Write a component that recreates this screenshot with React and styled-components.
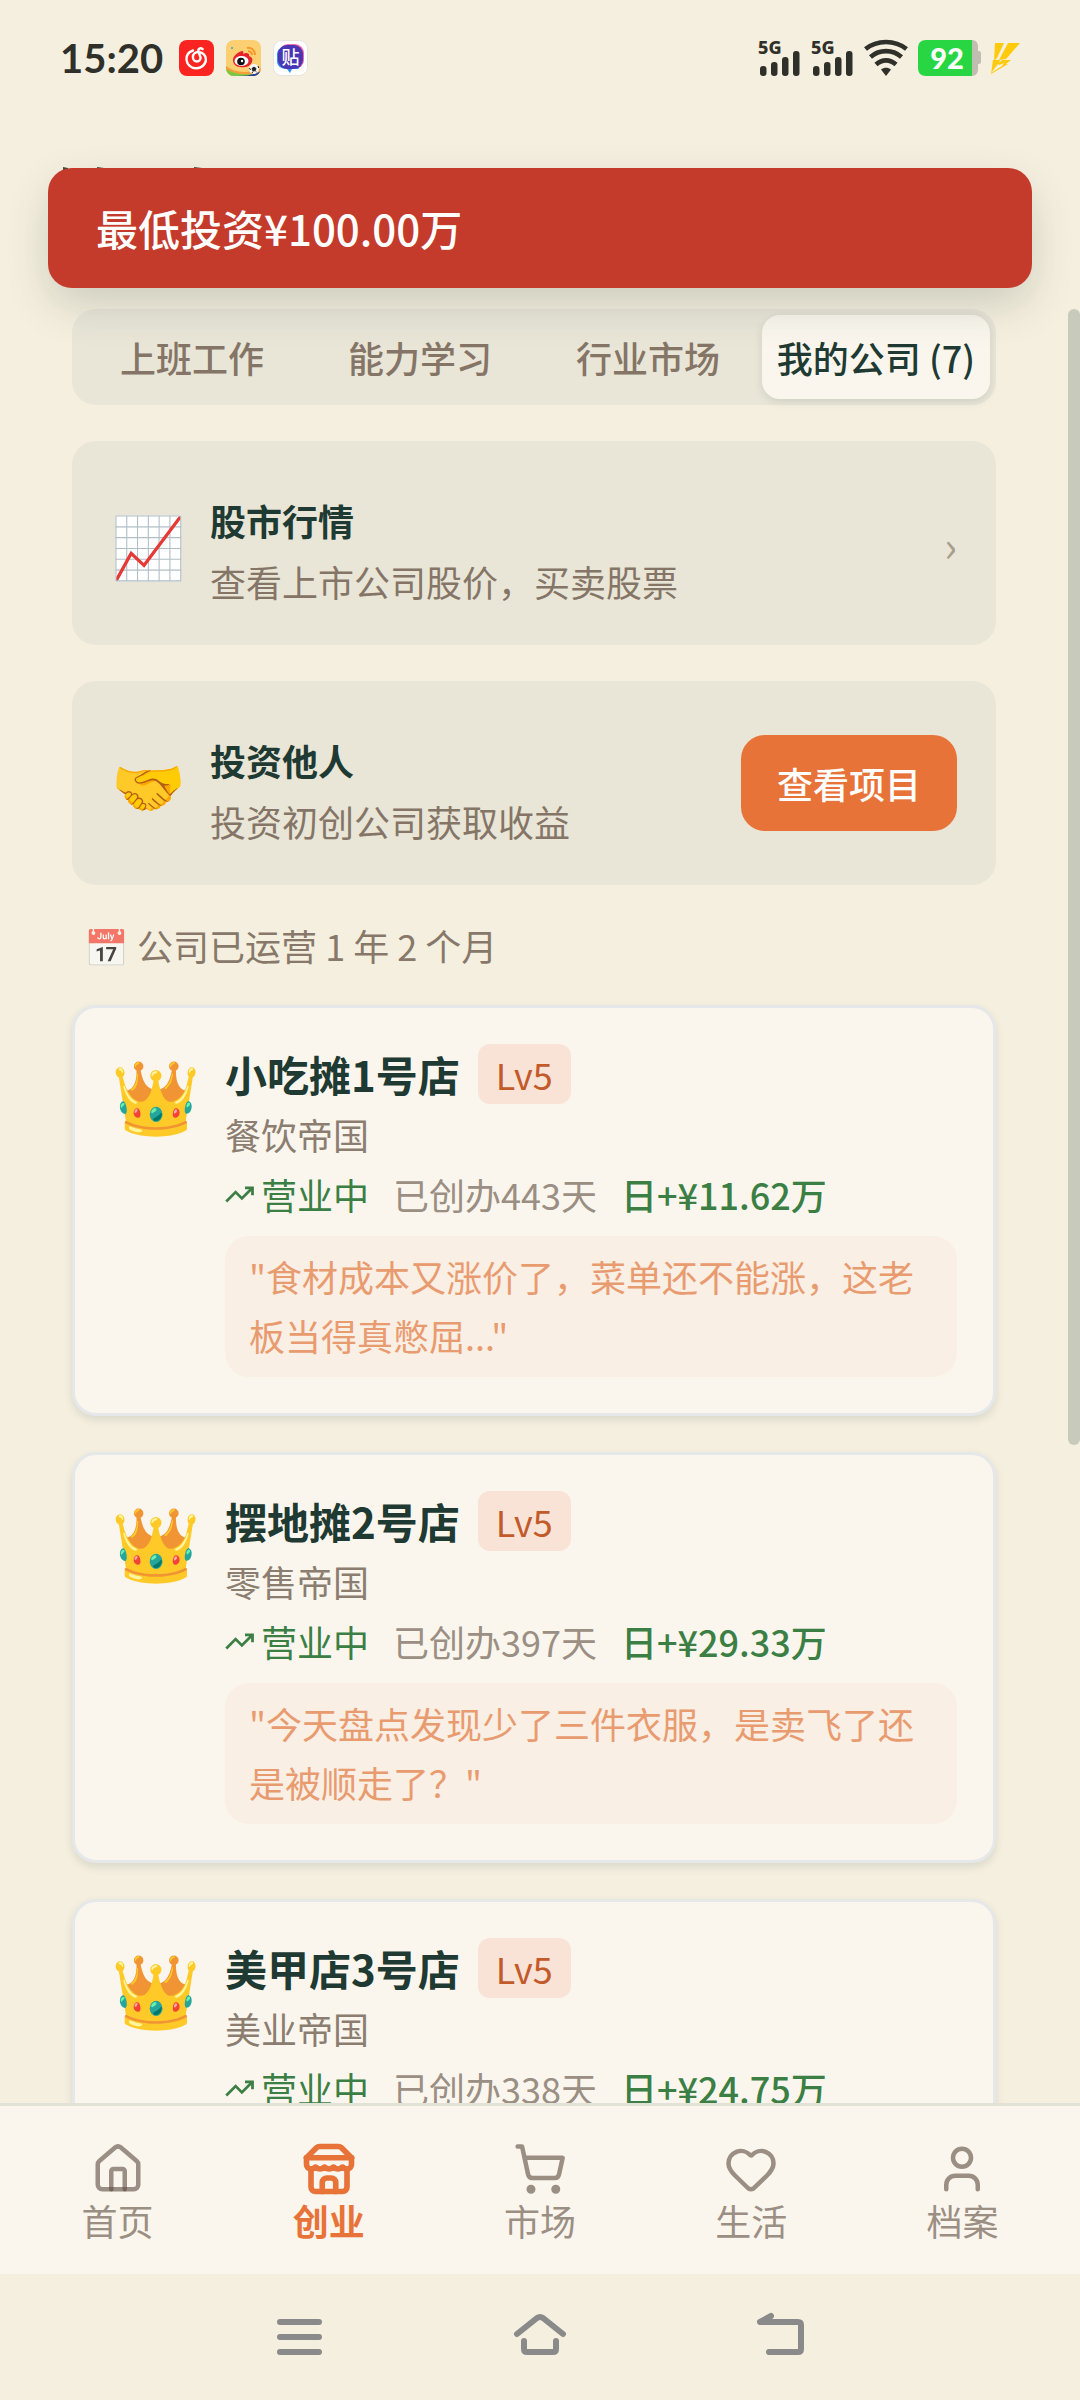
import React from "react";
import styled, { createGlobalStyle } from "styled-components";
import { Heart, ShoppingCart, User } from "lucide-react";

const GlobalStyle = createGlobalStyle`
  * {
    box-sizing: border-box;
  }

  body {
    margin: 0;
    background: #f5efdf;
    color: #1e3a32;
    font-family: "Noto Sans CJK SC", "Noto Sans", sans-serif;
    font-size: 36px;
  }

  button {
    border: 0;
    padding: 0;
    background: none;
    color: inherit;
    font: inherit;
    cursor: pointer;
  }

  h1, h2, h3, p {
    margin: 0;
  }
`;

const Page = styled.div`
  position: relative;
  display: flex;
  flex-direction: column;
  height: 100vh;
  overflow: hidden;
`;

const StatusBar = styled.div`
  display: flex;
  align-items: center;
  justify-content: space-between;
  padding: 30px 60px 0;
`;

const StatusGroup = styled.div`
  display: flex;
  align-items: center;
  gap: ${({ $gap }) => $gap}px;
`;

const Clock = styled.span`
  margin-right: 4px;
  color: #30302a;
  font-family: Lato, sans-serif;
  font-size: 40px;
  font-weight: 700;
  line-height: 56px;
`;

const Header = styled.header`
  display: flex;
  flex: none;
  height: 223px;
  padding: 81px 63px 0;
`;

const Toast = styled.div`
  position: absolute;
  top: 168px;
  left: 48px;
  right: 48px;
  z-index: 10;
  padding: 30px 48px;
  border-radius: 24px;
  background: #c43a2b;
  box-shadow: 0 18px 45px -3px rgba(28, 58, 48, 0.2);
  color: #ffffff;
  font-size: 42px;
  font-weight: 500;
  line-height: 60px;
`;

const Content = styled.main`
  position: relative;
  display: flex;
  flex: 1;
  flex-direction: column;
  min-height: 0;
  overflow: hidden;
  padding: 0 84px 0 72px;
`;

const Scrollbar = styled.div`
  position: absolute;
  top: 0;
  right: 0;
  width: 12px;
  height: 1136px;
  border-radius: 6px;
  background: #c8cabb;
`;

const Tabs = styled.div`
  display: grid;
  flex: none;
  grid-template-columns: repeat(4, 1fr);
  padding: 6px;
  border-radius: 24px;
  background: #e9e6d8;
`;

const Tab = styled.button`
  height: 84px;
  border-radius: 18px;
  background: ${({ $active }) => ($active ? "#faf6ed" : "transparent")};
  box-shadow: ${({ $active }) => ($active ? "0 3px 9px rgba(28, 58, 48, 0.12)" : "none")};
  color: ${({ $active }) => ($active ? "#1e3a32" : "#857566")};
  font-weight: 500;
  line-height: 52px;
  white-space: nowrap;
`;

const EntryCard = styled.section`
  display: flex;
  flex: none;
  align-items: center;
  gap: 24px;
  margin-top: 36px;
  padding: 39px;
  border-radius: 24px;
  background: #e9e6d8;
`;

const EntryEmoji = styled.span`
  font-size: 60px;
  line-height: 90px;
`;

const EntryText = styled.div`
  flex: 1;
  padding: 13px 0 1px;
`;

const EntryTitle = styled.h2`
  font-size: 36px;
  font-weight: 700;
  line-height: 54px;
`;

const EntryHint = styled.p`
  padding-top: 10px;
  color: #857566;
  line-height: 48px;
`;

const Chevron = styled.span`
  color: #a79e8c;
  font-size: 42px;
`;

const PrimaryButton = styled.button`
  padding: 20px 36px;
  border-radius: 24px;
  background: #e87339;
  color: #ffffff;
  font-weight: 500;
  line-height: 56px;
`;

const RunningTime = styled.p`
  flex: none;
  padding: 33px 12px 33px;
  color: #87786a;
  line-height: 54px;
`;

const Calendar = styled.span`
  opacity: 0.7;
`;

const CompanyList = styled.div`
  display: flex;
  flex: none;
  flex-direction: column;
  gap: 36px;
`;

const CompanyCard = styled.article`
  display: flex;
  align-items: flex-start;
  gap: 24px;
  padding: 36px;
  border: 3px solid #e5e7e9;
  border-radius: 24px;
  background: #faf6ed;
  box-shadow: 0 4px 9px rgba(28, 58, 48, 0.12);
`;

const CompanyEmoji = styled.span`
  font-size: 72px;
  line-height: 96px;
`;

const CompanyInfo = styled.div`
  flex: 1;
  min-width: 0;
  line-height: 60px;
`;

const CompanyHead = styled.div`
  display: flex;
  align-items: center;
  gap: 18px;
`;

const CompanyName = styled.h3`
  font-size: 42px;
  font-weight: 700;
`;

const Level = styled.span`
  padding: 0 18px;
  border-radius: 12px;
  background: #f8e3d6;
  color: #c25a2a;
`;

const Industry = styled.p`
  color: #8b7d70;
`;

const Stats = styled.div`
  display: flex;
  gap: 24px;
`;

const Status = styled.span`
  display: flex;
  align-items: center;
  gap: 6px;
  color: #3b7f45;
`;

const Age = styled.span`
  color: #9b8e83;
`;

const Income = styled.span`
  color: #3b7f45;
  font-weight: 500;
`;

const Quote = styled.p`
  margin-top: 12px;
  padding: 11px 24px 12px;
  border-radius: 24px;
  background: #f9efe4;
  color: #e99b70;
  line-height: 59px;
`;

const TabBar = styled.nav`
  display: grid;
  flex: none;
  grid-template-columns: repeat(5, 1fr);
  padding: 36px 12px 30px;
  border-top: 3px solid #e3e2d6;
  background: #faf5ed;
`;

const TabBarItem = styled.button`
  display: flex;
  flex-direction: column;
  align-items: center;
  color: ${({ $active }) => ($active ? "#e87339" : "#9b8e83")};
  font-weight: ${({ $active }) => ($active ? 700 : 400)};
  line-height: 48px;
`;

const SystemBar = styled.div`
  display: flex;
  flex: none;
  align-items: center;
  justify-content: center;
  gap: 180px;
  height: 126px;
`;

const SystemButton = styled.button`
  display: flex;
  width: 60px;
  height: 60px;
`;

function MusicIcon() {
  return (
    <svg width="35" height="36" viewBox="0 0 35 36">
      <rect width="35" height="36" rx="8" fill="#fb2420" />
      <path
        d="M14 10.500c-4.500 1.600-7 5-6.500 9.300.6 4.700 4.500 8.500 9.700 8.500s9.700-3.900 9.700-8.800c0-4.200-3.400-7.500-7.500-7.500-3.200 0-5.500 2.200-5.500 5 0 2.600 1.700 4.500 4 4.500s4-1.900 3.600-4.200l-2.200-6.300c-.4-2.200 2-3.500 4.300-2"
        fill="none"
        stroke="#fff"
        strokeWidth="2.400"
        strokeLinecap="round"
      />
    </svg>
  );
}

function WeiboIcon() {
  return (
    <svg width="35" height="36" viewBox="0 0 35 36">
      <defs>
        <clipPath id="weibo-tile">
          <rect width="35" height="36" rx="8" />
        </clipPath>
      </defs>
      <g clipPath="url(#weibo-tile)">
        <rect width="35" height="36" fill="#fbcf72" />
        <path d="M0 26c9 7 22 8 35 2v8H0z" fill="#f4a03a" />
        <path d="M0 29c9 6 22 7 35 3v4H0z" fill="#7ac943" />
        <path d="M12 36c8 0 16-1 23-5v5z" fill="#2b3f9f" />
        <path d="M21 8c4-1 8 2 8 7M22 11c2 0 4 2 4 4" fill="none" stroke="#f39a2a" strokeWidth="2" />
        <path d="M7 20c0-4 5-8 9-9 1 0 2 1 1 3 3-2 7-1 6 2 3 1 4 3 3 6-2 5-8 6-12 5-4 0-7-3-7-7z" fill="#e6222a" />
        <ellipse cx="15.500" cy="21" rx="7" ry="5" fill="#fff" />
        <circle cx="15" cy="21.500" r="3.800" fill="#111" />
        <circle cx="16" cy="21" r="1.200" fill="#fff" />
        <circle cx="28" cy="29" r="5" fill="#f7f7f7" />
        <path d="M28 27l2 1.500-.8 2.300h-2.400L26 28.500zM23.500 28l1 2M32 26l.8 2M26 33l1-1.500M31 32.500l-1-1" fill="#222" stroke="#222" strokeWidth="1" />
        <circle cx="6" cy="8" r="1" fill="#3aa7b8" />
      </g>
    </svg>
  );
}

function TiebaIcon() {
  return (
    <svg width="35" height="36" viewBox="0 0 35 36">
      <rect x="0.500" y="0.500" width="34" height="35" rx="8" fill="#fff" stroke="#e6e2dc" />
      <rect x="6" y="4" width="25" height="25" rx="9" fill="#f06aa8" />
      <path d="M4 15c0-5 3-8 8-8l14 22h-7l-2 4-3-4c-6 0-10-3-10-8z" fill="#2f8df0" />
      <rect x="5" y="5" width="25" height="24" rx="9" fill="#4a35b4" />
      <text x="17.500" y="24" fill="#fff" fontSize="18" fontWeight="500" textAnchor="middle">贴</text>
    </svg>
  );
}

function Signal() {
  return (
    <svg width="43" height="38" viewBox="0 0 43 38" fill="#30302a">
      <text x="0" y="15" fontFamily="Noto Sans, sans-serif" fontSize="18" fontWeight="800">5G</text>
      <rect x="2" y="27" width="6.500" height="10" rx="3" />
      <rect x="13" y="23" width="6.500" height="14" rx="3" />
      <rect x="24" y="18" width="6.500" height="19" rx="3" />
      <rect x="35" y="12" width="6.500" height="25" rx="3" />
    </svg>
  );
}

function Wifi() {
  return (
    <svg width="44" height="38" viewBox="0 0 44 38" fill="none" stroke="#30302a" strokeWidth="4.600">
      <path d="M1.500 10C13 0.600 31 0.600 42.500 10" />
      <path d="M6.500 18C15.500 10.200 28.500 10.200 37.500 18" />
      <path d="M12 25.500C18 20 26 20 32 25.500" />
      <path d="M17 30.500c3-2.200 7-2.200 10 0L22 37z" fill="#30302a" stroke="none" />
    </svg>
  );
}

function Battery() {
  return (
    <svg width="63" height="36" viewBox="0 0 63 36">
      <path d="M54 0c4 0 6 3 6 7v4h1c1 0 2 1 2 2v9c0 1-1 2-2 2h-1v5c0 4-2 7-6 7z" fill="#c0bdb1" />
      <path d="M8 0h46v36H8c-5 0-8-3-8-8V8c0-5 3-8 8-8z" fill="#28d644" />
      <text x="29" y="29" fill="#fff" fontFamily="Lato, sans-serif" fontSize="29" fontWeight="900" textAnchor="middle">92</text>
    </svg>
  );
}

function Bolt() {
  return (
    <svg width="29" height="31" viewBox="0 0 29 31" fill="#ffca0a">
      <path d="M4 0h9L6 15l-3 3z" />
      <path d="M17 0h12L15 16l-7 1z" />
      <path d="M2 17h7l-1 3 3-3h9l-5 4h2L0 31z" />
      <path d="M0 30l7-9 1 1 5-2-2 3z" fill="#f5efdf" />
    </svg>
  );
}

/* top edge of the page heading, the rest is under the toast */
function HeadingEdge() {
  return (
    <svg width="142" height="4" viewBox="0 0 142 4" fill="#3c4a42">
      <path d="M0 0l5 1v2H0zM34 0l7 1v1h-7zM131 0l8 1v1h-8z" />
    </svg>
  );
}

function TrendIcon() {
  return (
    <svg width="30" height="30" viewBox="0 0 24 24" fill="none" stroke="currentColor" strokeWidth="2.200">
      <path d="M16 7h6v6" />
      <path d="m22 7-8.500 8.500-5-5L1 18" />
    </svg>
  );
}

function HomeIcon() {
  return (
    <svg width="54" height="54" viewBox="0 0 24 24" fill="none" stroke="rgba(92, 74, 61, 0.6)" strokeWidth="2" strokeLinecap="round" strokeLinejoin="round">
      <path d="M3 10a2 2 0 0 1 .709-1.528l7-5.999a2 2 0 0 1 2.582 0l7 5.999A2 2 0 0 1 21 10v9a2 2 0 0 1-2 2H5a2 2 0 0 1-2-2z" />
      <path d="M15 21v-8a1 1 0 0 0-1-1h-4a1 1 0 0 0-1 1v8" />
    </svg>
  );
}

function StoreIcon() {
  return (
    <svg width="54" height="54" viewBox="0 0 24 24" fill="none" stroke="currentColor" strokeWidth="2.500" strokeLinecap="round" strokeLinejoin="round">
      <path d="m2 7 4.410-4.410A2 2 0 0 1 7.830 2h8.340a2 2 0 0 1 1.420.59L22 7" />
      <path d="M4 12v8a2 2 0 0 0 2 2h12a2 2 0 0 0 2-2v-8" />
      <path d="M15 22v-4a2 2 0 0 0-2-2h-2a2 2 0 0 0-2 2v4" />
      <path d="M2 7h20" />
      <path d="M22 7v3a2 2 0 0 1-2 2a2.700 2.700 0 0 1-1.590-.63.7.7 0 0 0-.82 0A2.700 2.700 0 0 1 16 12a2.700 2.700 0 0 1-1.590-.63.7.7 0 0 0-.82 0A2.700 2.700 0 0 1 12 12a2.700 2.700 0 0 1-1.590-.63.7.7 0 0 0-.82 0A2.700 2.700 0 0 1 8 12a2.700 2.700 0 0 1-1.590-.63.7.7 0 0 0-.82 0A2.700 2.700 0 0 1 4 12a2 2 0 0 1-2-2V7" />
    </svg>
  );
}

function SystemIcon({ d }) {
  return (
    <svg width="60" height="60" viewBox="0 0 60 60" fill="none" stroke="#8a8a8a" strokeWidth="6" strokeLinecap="round" strokeLinejoin="round">
      <path d={d} />
    </svg>
  );
}

const tabs = ["上班工作", "能力学习", "行业市场", "我的公司 (7)"];

const companies = [
  {
    name: "小吃摊1号店",
    industry: "餐饮帝国",
    days: 443,
    income: "11.62",
    quote: "食材成本又涨价了，菜单还不能涨，这老板当得真憋屈...",
  },
  {
    name: "摆地摊2号店",
    industry: "零售帝国",
    days: 397,
    income: "29.33",
    quote: "今天盘点发现少了三件衣服，是卖飞了还是被顺走了？",
  },
  { name: "美甲店3号店", industry: "美业帝国", days: 338, income: "24.75" },
];

const navItems = [
  { label: "首页", icon: <HomeIcon /> },
  { label: "创业", icon: <StoreIcon />, active: true },
  { label: "市场", icon: <ShoppingCart size={54} /> },
  { label: "生活", icon: <Heart size={54} /> },
  { label: "档案", icon: <User size={54} /> },
];

const systemItems = [
  { label: "最近任务", d: "M10 15h39M10 30h39M10 45h39" },
  { label: "主屏幕", d: "M7 27L27 11q3-2 6 0L53 27M14 34v8q0 3 3 3h26q3 0 3-3v-8" },
  { label: "返回", d: "M21 9l-11 6h38q3 0 3 3v24q0 3-3 3H19" },
];

function Company({ company }) {
  return (
    <CompanyCard>
      <CompanyEmoji>👑</CompanyEmoji>
      <CompanyInfo>
        <CompanyHead>
          <CompanyName>{company.name}</CompanyName>
          <Level>Lv5</Level>
        </CompanyHead>
        <Industry>{company.industry}</Industry>
        <Stats>
          <Status>
            <TrendIcon />
            营业中
          </Status>
          <Age>{`已创办${company.days}天`}</Age>
          <Income>{`日+¥${company.income}万`}</Income>
        </Stats>
        {company.quote && <Quote>{`"${company.quote}"`}</Quote>}
      </CompanyInfo>
    </CompanyCard>
  );
}

function App() {
  return (
    <Page>
      <GlobalStyle />
      <StatusBar>
        <StatusGroup $gap={12}>
          <Clock>15:20</Clock>
          <MusicIcon />
          <WeiboIcon />
          <TiebaIcon />
        </StatusGroup>
        <StatusGroup $gap={10}>
          <Signal />
          <Signal />
          <Wifi />
          <Battery />
          <Bolt />
        </StatusGroup>
      </StatusBar>
      <Header>
        <HeadingEdge />
      </Header>
      <Toast role="alert">最低投资¥100.00万</Toast>
      <Content>
        <Tabs role="tablist">
          {tabs.map((tab, i) => (
            <Tab key={tab} role="tab" aria-selected={i === 3} $active={i === 3}>
              {tab}
            </Tab>
          ))}
        </Tabs>
        <EntryCard>
          <EntryEmoji>📈</EntryEmoji>
          <EntryText>
            <EntryTitle>股市行情</EntryTitle>
            <EntryHint>查看上市公司股价，买卖股票</EntryHint>
          </EntryText>
          <Chevron>›</Chevron>
        </EntryCard>
        <EntryCard>
          <EntryEmoji>🤝</EntryEmoji>
          <EntryText>
            <EntryTitle>投资他人</EntryTitle>
            <EntryHint>投资初创公司获取收益</EntryHint>
          </EntryText>
          <PrimaryButton>查看项目</PrimaryButton>
        </EntryCard>
        <RunningTime>
          <Calendar>📅</Calendar> 公司已运营 1 年 2 个月
        </RunningTime>
        <CompanyList>
          {companies.map((company) => (
            <Company key={company.name} company={company} />
          ))}
        </CompanyList>
        <Scrollbar />
      </Content>
      <TabBar>
        {navItems.map((item) => (
          <TabBarItem key={item.label} $active={item.active}>
            {item.icon}
            {item.label}
          </TabBarItem>
        ))}
      </TabBar>
      <SystemBar>
        {systemItems.map((item) => (
          <SystemButton key={item.label} aria-label={item.label}>
            <SystemIcon d={item.d} />
          </SystemButton>
        ))}
      </SystemBar>
    </Page>
  );
}

export default App;
